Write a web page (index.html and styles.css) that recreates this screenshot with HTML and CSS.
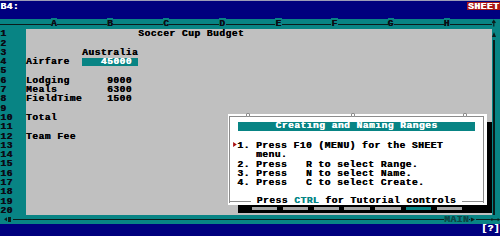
FILE: index.html
```html
<!DOCTYPE html>
<html lang="en">
<head>
<meta charset="utf-8">
<title>Soccer Cup Budget</title>
<link rel="stylesheet" href="styles.css">
</head>
<body>
<div class="screen">
  <header class="topbar"><span class="cellref">B4:</span><span class="mode">SHEET</span></header>
  <main class="sheet">
    <div class="labels">
      <div class="hdr"></div>
      <div class="rows">
        <div>1</div><div>2</div><div>3</div><div>4</div><div>5</div><div>6</div><div>7</div><div>8</div><div>9</div><div>10</div><div>11</div><div>12</div><div>13</div><div>14</div><div>15</div><div>16</div><div>17</div><div>18</div><div>19</div><div>20</div>
      </div>
    </div>
    <div class="grid">
      <div class="hdr cols">    <span class="L">A</span>        <span class="L">B</span>        <span class="L">C</span>        <span class="L">D</span>        <span class="L">E</span>        <span class="L">F</span>        <span class="L">G</span>        <span class="L">H</span></div>
      <div class="rows cells">
<div>                  Soccer Cup Budget</div>
<div></div>
<div>         Australia</div>
<div>Airfare  <span class="cur">   45000 </span></div>
<div></div>
<div>Lodging      9000</div>
<div>Meals        6300</div>
<div>FieldTime    1500</div>
<div></div>
<div>Total</div>
<div></div>
<div>Team Fee</div>
<div></div><div></div><div></div><div></div><div></div><div></div><div></div><div></div>
      </div>
    </div>
    <div class="vscroll">
      <div class="vhdr"><svg width="8" height="9.5" viewBox="0 0 8 9.5"><path d="M1.8 1.8V7.4M0.2 3.8L1.8 1.6L3.4 3.8" fill="none" stroke="#0b1b1b" stroke-width="1.2"/></svg></div>
      <div class="vtrack">
        <svg class="up" width="4" height="5" viewBox="0 0 4 5"><polygon points="0,5 2,0 4,5" fill="#0b1b1b"/></svg>
        <i class="vthumb"></i>
        <i class="vline"></i>
      </div>
    </div>
  </main>
  <div class="hscroll">
    <svg class="lft" width="3.4" height="4.4" viewBox="0 0 3.4 4.4"><polygon points="3.4,0 0,2.2 3.4,4.4" fill="#0b1b1b"/></svg>
    <i class="hthumb"></i>
    <div class="hline"><span class="main">MAIN</span><i class="seg"></i><svg class="rgt" width="6" height="9" viewBox="0 0 6 9"><polygon points="0.8,2.4 5,4.6 0.8,6.8" fill="#0b1b1b"/></svg><i class="gap"></i></div>
    <svg class="lr" width="10" height="9" viewBox="0 0 10 9"><path d="M0.5 4.6H9.5" stroke="#0b1b1b" stroke-width="1"/><polygon points="0,4.6 2.4,3 2.4,6.2" fill="#0b1b1b"/><polygon points="10,4.6 7.6,3 7.6,6.2" fill="#0b1b1b"/></svg>
  </div>
  <footer class="status"><span>[?]</span></footer>

  <div class="shadow"><div class="tabs"><i></i><i></i><i></i><i></i><i></i><i class="on"></i><i></i></div></div>
  <section class="dialog">
    <div class="frame">
      <i class="knob k1"></i><i class="knob k2"></i><i class="knob k3"></i>
      <div class="title">Creating and Naming Ranges</div>
      <div class="steps">
        <div><span class="ptr"><svg width="6.2" height="9.4" viewBox="0 0 6.2 9.4"><polygon points="2.1,0.9 5.8,3.4 2.1,5.9" fill="#a80e0e"/></svg></span>1. Press F10 (MENU) for the SHEET</div>
        <div><span class="ptr"></span>   menu.</div>
        <div><span class="ptr"></span>2. Press   R to select Range.</div>
        <div><span class="ptr"></span>3. Press   N to select Name.</div>
        <div><span class="ptr"></span>4. Press   C to select Create.</div>
      </div>
      <div class="foot"><span> Press <em>CTRL</em> for Tutorial controls </span></div>
    </div>
  </section>
</div>
</body>
</html>
```

FILE: styles.css
```css
* { box-sizing: border-box; margin: 0; padding: 0; }
html, body { width: 500px; height: 236px; overflow: hidden; background: #c0c0c0; }
body { margin: 0; }

.screen {
  position: relative;
  width: 500px;
  height: 236px;
  display: flex;
  flex-direction: column;
  font-family: "Liberation Mono", "DejaVu Sans Mono", monospace;
  font-weight: bold;
  font-size: 9.6px;
  letter-spacing: 0.476px;
  color: #000;
  text-shadow: 0.35px 0 0 currentColor;
}

/* top line */
.topbar {
  height: 19px;
  flex: none;
  background: #00007e;
  border-top: 1px solid #9c9cb8;
  padding-top: 1px;
  line-height: 9.4px;
  color: #fff;
  display: flex;
  justify-content: space-between;
  align-items: flex-start;
}
.cellref { padding-left: 0.4px; }
.mode {
  width: 32.7px;
  height: 8.3px;
  line-height: 9.8px;
  padding-left: 0.8px;
  background: #a81616;
  overflow: visible;
}

/* sheet */
.sheet { height: 195.5px; flex: none; display: flex; }
.hdr {
  height: 9.5px;
  line-height: 9.5px;
  flex: none;
  background: linear-gradient(#0b1b1b, #0b1b1b) 0 4.6px / 100% 1.2px no-repeat, #088484;
}
.labels { width: 26px; flex: none; display: flex; flex-direction: column; background: #088484; color: #0b0b14; }
.rows { height: 186px; padding-top: 0.8px; }
.rows > div { height: 9.3px; line-height: 9.3px; white-space: pre; }
.labels .rows > div { padding-left: 0.3px; }
.grid { flex: 1; display: flex; flex-direction: column; background: #c0c0c0; }
.cols { white-space: pre; color: #0b0b14; }
.cols .L { background: #088484; }
.cur {
  display: inline-block;
  height: 7.4px;
  line-height: 7.4px;
  background: #088484;
  color: #fff;
}

.vscroll { width: 8px; flex: none; display: flex; flex-direction: column; background: #088484; }
.vhdr { height: 9.5px; flex: none; }
.vhdr svg { display: block; }
.vtrack { flex: 1; display: flex; flex-direction: column; }
.up { display: block; margin-top: 3.2px; flex: none; }
.vthumb { display: block; margin: 3.3px 0 0 0.7px; width: 2.6px; height: 6.7px; background: #0b1b1b; flex: none; }
.vline { display: block; margin-left: 1.3px; width: 1.7px; flex: 1; background: #0b1b1b; }

/* bottom scroll row */
.hscroll { height: 9px; flex: none; display: flex; align-items: flex-start; background: #088484; }
.lft { display: block; margin: 2.8px 0 0 4px; flex: none; }
.hthumb { display: block; margin: 2.2px 0 0 1px; width: 2.7px; height: 5.6px; background: #0b1b1b; flex: none; }
.hline {
  flex: 1;
  height: 9px;
  display: flex;
  align-items: flex-start;
  justify-content: flex-end;
  padding-left: 2px;
  background: linear-gradient(#0b1b1b, #0b1b1b) 2px 4.5px / 100% 1px no-repeat;
}
.main { background: #088484; color: #0c4646; line-height: 10.6px; height: 9px; }
.seg { display: block; width: 0.8px; }
.rgt { display: block; background: #088484; flex: none; }
.gap { display: block; width: 14px; }
.lr { display: block; flex: none; }

.status {
  height: 12.5px;
  flex: none;
  background: #00007e;
  color: #fff;
  line-height: 9.4px;
  padding-top: 0.9px;
  text-align: right;
}

/* dialog */
.shadow {
  position: absolute;
  left: 238.3px;
  top: 121.7px;
  width: 254px;
  height: 91.6px;
  background: #000;
  display: flex;
  flex-direction: column;
  justify-content: flex-end;
  padding: 0 0 3.3px 13.7px;
}
.tabs { display: flex; gap: 5.3px; }
.tabs i { display: block; width: 25.5px; height: 3.3px; background: #a6a6a6; }
.tabs i.on { background: #088484; }

.dialog {
  position: absolute;
  left: 227.5px;
  top: 114px;
  width: 259px;
  height: 91px;
  background: #fff;
  padding: 1.5px 2.5px 2.5px 1.5px;
}
.frame {
  position: relative;
  height: 100%;
  border: 1px solid #8c8c8c;
  border-bottom: 0;
  display: flex;
  flex-direction: column;
}
.knob {
  position: absolute;
  top: -3.2px;
  width: 3.6px;
  height: 3.6px;
  border: 1px solid #8c8c8c;
  border-radius: 1px;
  background: #fff;
}
.k1 { left: 16px; }
.k2 { left: 121px; }
.k3 { left: 233.3px; }
.title {
  margin: 5.5px 8px 0 8px;
  height: 8.7px;
  line-height: 8.7px;
  flex: none;
  background: #088484;
  color: #fff;
  text-align: center;
  white-space: pre;
}
.steps { margin-top: 10.1px; flex: none; }
.steps > div { height: 9.4px; line-height: 9.4px; white-space: pre; padding-left: 1.1px; }
.ptr { display: inline-block; width: 6.236px; height: 9.4px; vertical-align: top; }
.ptr svg { display: block; }
.foot { margin-top: 8.1px; height: 6.6px; flex: none; display: flex; }
.foot::before, .foot::after { content: ""; flex: 1; height: 1px; background: #8c8c8c; align-self: flex-end; }
.foot span { white-space: pre; line-height: 9.4px; height: 9.4px; align-self: flex-start; }
.foot em { font-style: normal; color: #078686; }
```
